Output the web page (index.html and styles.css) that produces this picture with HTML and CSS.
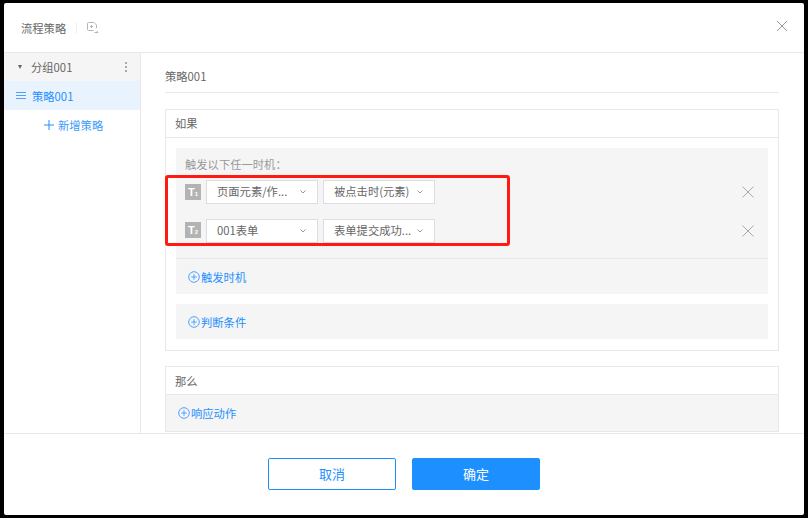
FILE: index.html
```html
<!DOCTYPE html>
<html lang="zh">
<head>
<meta charset="utf-8">
<title>流程策略</title>
<link rel="stylesheet" href="styles.css">
</head>
<body>
<div class="modal">
  <header class="head">
    <span class="head-title">流程策略</span>
    <span class="head-sep"></span>
    <svg class="head-icon" width="12" height="12" viewBox="0 0 12 12" fill="none" stroke="#b5b5b5"><path d="M6.500 8.500H1.500a1 1 0 0 1-1-1V1.500a1 1 0 0 1 1-1h5.500l2.500 2.500v3"/><path d="M3 4.500h3M4.500 3v3"/><path d="M7.500 10.500h3.500M9.800 9l1.200 1.500"/></svg>
    <svg class="head-close" width="12" height="12" viewBox="0 0 12 12" stroke="#999" stroke-width="1" fill="none"><path d="M1 1l10 10M11 1L1 11"/></svg>
  </header>
  <div class="body">
    <aside class="side">
      <div class="group">
        <span class="caret"></span>
        <span class="group-name">分组001</span>
        <span class="dots"><i></i><i></i><i></i></span>
      </div>
      <div class="item">
        <svg width="10" height="8" viewBox="0 0 10 8" stroke="#4aa3ff" fill="none"><path d="M0 .5h10M0 3.500h10M0 6.500h10"/></svg>
        <span>策略001</span>
      </div>
      <div class="add">
        <svg width="10" height="10" viewBox="0 0 10 10" stroke="#1e8fff" fill="none"><path d="M5 0v10M0 5h10"/></svg>
        <span>新增策略</span>
      </div>
    </aside>
    <main class="main">
      <div class="title">策略001</div>
      <section class="box box-if">
        <div class="box-head">如果</div>
        <div class="box-body">
          <div class="panel">
            <div class="panel-label">触发以下任一时机：</div>
            <div class="row">
              <span class="badge">T<sub>1</sub></span>
              <span class="select"><span class="select-text">页面元素/作...</span><svg class="chev" width="6" height="4" viewBox="0 0 6 4" stroke="#999" fill="none"><path d="M.5.5l2.500 2.500L5.500.5"/></svg></span>
              <span class="select"><span class="select-text">被点击时(元素)</span><svg class="chev" width="6" height="4" viewBox="0 0 6 4" stroke="#999" fill="none"><path d="M.5.5l2.500 2.500L5.500.5"/></svg></span>
              <svg class="row-close" width="12" height="12" viewBox="0 0 12 12" stroke="#a8a8a8" fill="none"><path d="M.5.5l11 11M11.500.5l-11 11"/></svg>
            </div>
            <div class="row">
              <span class="badge">T<sub>2</sub></span>
              <span class="select"><span class="select-text">001表单</span><svg class="chev" width="6" height="4" viewBox="0 0 6 4" stroke="#999" fill="none"><path d="M.5.5l2.500 2.500L5.500.5"/></svg></span>
              <span class="select"><span class="select-text">表单提交成功...</span><svg class="chev" width="6" height="4" viewBox="0 0 6 4" stroke="#999" fill="none"><path d="M.5.5l2.500 2.500L5.500.5"/></svg></span>
              <svg class="row-close" width="12" height="12" viewBox="0 0 12 12" stroke="#a8a8a8" fill="none"><path d="M.5.5l11 11M11.500.5l-11 11"/></svg>
            </div>
            <div class="panel-action">
              <svg width="12" height="12" viewBox="0 0 12 12" stroke="#4aa3ff" fill="none"><circle cx="6" cy="6" r="5.300"/><path d="M6 3.200v5.600M3.200 6h5.600"/></svg>
              <span>触发时机</span>
            </div>
          </div>
          <div class="panel panel-cond">
            <svg width="12" height="12" viewBox="0 0 12 12" stroke="#4aa3ff" fill="none"><circle cx="6" cy="6" r="5.300"/><path d="M6 3.200v5.600M3.200 6h5.600"/></svg>
            <span>判断条件</span>
          </div>
        </div>
      </section>
      <section class="box box-then">
        <div class="box-head box-head-then">那么</div>
        <div class="then-action">
          <svg width="12" height="12" viewBox="0 0 12 12" stroke="#4aa3ff" fill="none"><circle cx="6" cy="6" r="5.300"/><path d="M6 3.200v5.600M3.200 6h5.600"/></svg>
          <span>响应动作</span>
        </div>
      </section>
    </main>
  </div>
  <footer class="foot">
    <button class="btn btn-ghost">取消</button>
    <button class="btn btn-primary">确定</button>
  </footer>
  <div class="annot"></div>
</div>
</body>
</html>
```

FILE: styles.css
```css
* { box-sizing: border-box; }
html, body { height: 100%; }
body {
  margin: 0;
  background: #000;
  padding: 3px 4px;
  font-family: "Noto Sans CJK SC", "Noto Sans", "Liberation Sans", sans-serif;
  font-size: 11.3px;
  color: #666;
  overflow: hidden;
}
.modal {
  position: relative;
  width: 800px;
  height: 512px;
  background: #fff;
  border-radius: 2px;
  display: flex;
  flex-direction: column;
  overflow: hidden;
}
.head {
  flex: none;
  height: 50px;
  border-bottom: 1px solid #e8e8e8;
  display: flex;
  align-items: center;
  padding: 0 16px 0 17px;
}
.head-title { line-height: 16px; }
.head-sep { width: 1px; height: 12px; background: #eee; margin: 0 10px 0 10px; }
.head-icon { margin-top: 1px; }
.head-close { margin-left: auto; margin-top: -3px; }
.body { flex: 1; display: flex; min-height: 0; }
.side {
  flex: none;
  width: 137px;
  border-right: 1px solid #e8e8e8;
}
.group {
  height: 28px;
  background: #f5f5f5;
  display: flex;
  align-items: center;
  padding: 0 13px 0 14px;
  color: #666;
}
.caret {
  width: 0;
  height: 0;
  border-left: 2.500px solid transparent;
  border-right: 2.500px solid transparent;
  border-top: 4px solid #666;
  margin-right: 9px;
}
.group-name { flex: 1; }
.dots { display: flex; flex-direction: column; gap: 2px; }
.dots i { width: 2px; height: 2px; background: #aaa; display: block; }
.item {
  height: 29px;
  background: #e8f3fe;
  color: #1e8fff;
  display: flex;
  align-items: center;
  gap: 6px;
  padding-left: 12px;
}
.add {
  height: 29px;
  display: flex;
  align-items: center;
  gap: 4px;
  padding-left: 40px;
  color: #3d9bf8;
}
.main {
  flex: 1;
  min-width: 0;
  padding: 0 25px 0 24px;
  overflow: hidden;
}
.title {
  height: 40px;
  line-height: 47px;
  border-bottom: 1px solid #e8e8e8;
}
.box { border: 1px solid #e8e8e8; }
.box-if { margin-top: 16px; height: 242px; }
.box-then { margin-top: 15px; height: 66px; }
.box-head {
  height: 28px;
  line-height: 26px;
  padding-left: 9px;
  border-bottom: 1px solid #e8e8e8;
}
.box-head-then { line-height: 28px; }
.box-body { padding: 10px 10px 0; }
.panel { background: #f5f5f5; }
.panel-label {
  height: 32px;
  padding: 8px 0 0 9px;
  line-height: 16px;
  color: #999;
}
.row {
  height: 39px;
  display: flex;
  align-items: flex-start;
  padding-left: 9px;
  position: relative;
}
.badge {
  width: 16px;
  height: 16px;
  margin-top: 4px;
  margin-right: 5px;
  background: #b3b3b3;
  color: #fff;
  font-family: "Liberation Sans", sans-serif;
  font-size: 11px;
  font-weight: 700;
  line-height: 16px;
  text-align: center;
}
.row + .row .badge { margin-top: 3px; margin-bottom: 1px; }
.badge sub { font-size: 6px; vertical-align: baseline; }
.select {
  width: 112px;
  height: 24px;
  margin-right: 5px;
  background: #fff;
  border: 1px solid #ddd;
  display: flex;
  align-items: center;
  padding: 0 11px 0 10px;
  justify-content: space-between;
}
.select-text { white-space: nowrap; line-height: 16px; margin-top: -2px; }
.chev { flex: none; }
.row-close { position: absolute; left: 566px; top: 6px; }
.panel-action {
  border-top: 1px solid #e8e8e8;
  height: 36px;
  display: flex;
  align-items: center;
  gap: 1px;
  padding-left: 12px;
  color: #1e8fff;
}
.panel-cond {
  margin-top: 10px;
  height: 35px;
  display: flex;
  align-items: center;
  gap: 1px;
  padding-left: 12px;
  color: #1e8fff;
}
.then-action {
  height: 37px;
  background: #f5f5f5;
  border-bottom: 1px solid #e8e8e8;
  display: flex;
  align-items: center;
  gap: 1px;
  padding-left: 12px;
  color: #1e8fff;
}
.foot {
  flex: none;
  height: 82px;
  border-top: 1px solid #e8e8e8;
  display: flex;
  justify-content: center;
  align-items: flex-start;
  gap: 16px;
  padding-top: 24px;
}
.btn {
  width: 128px;
  height: 32px;
  border-radius: 2px;
  font-family: inherit;
  font-size: 13px;
  line-height: 28px;
  padding: 0;
  border: 1px solid #1e8fff;
}
.btn-ghost { background: #fff; color: #1e8fff; }
.btn-primary { background: #1e8fff; color: #fff; }
.annot {
  position: absolute;
  left: 161px;
  top: 172px;
  width: 345px;
  height: 71px;
  border: 3px solid #ff1a12;
  border-radius: 3px;
}
```
